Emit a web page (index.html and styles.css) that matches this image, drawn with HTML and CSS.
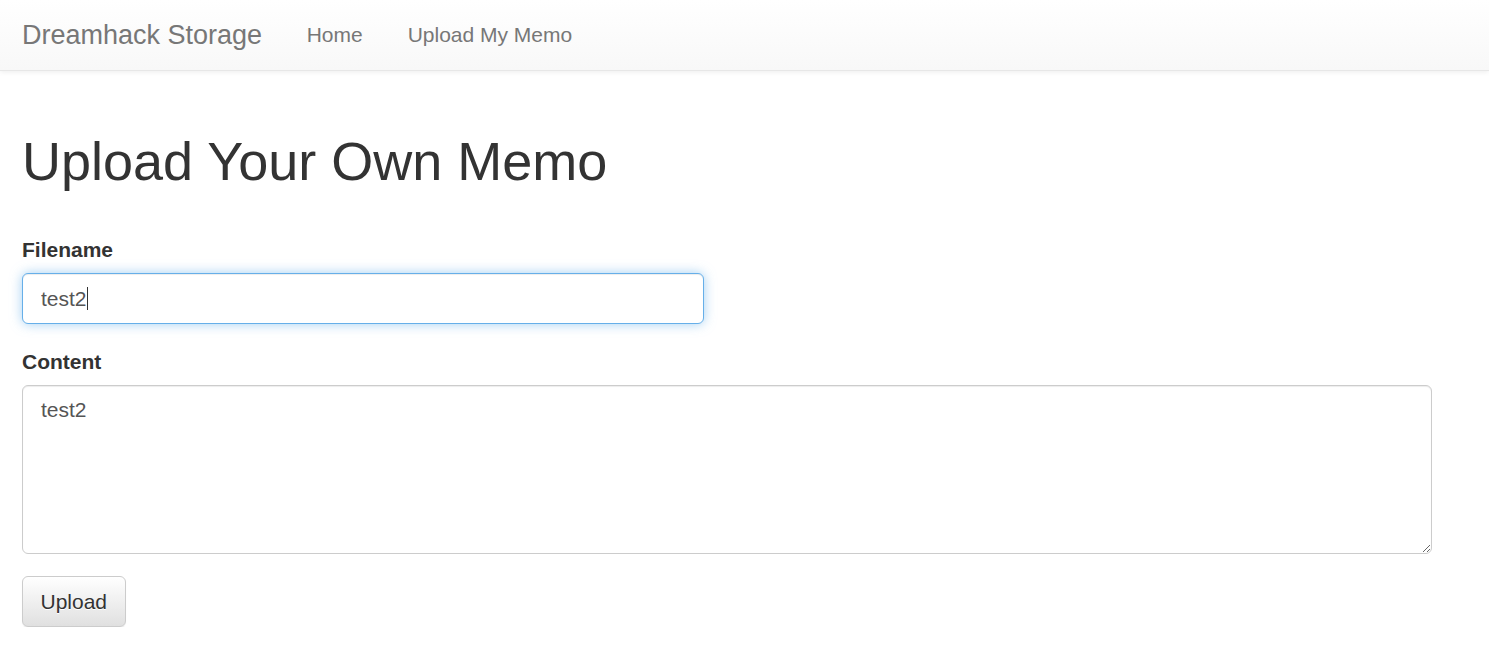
FILE: index.html
```html
<!DOCTYPE html>
<html lang="en">
<head>
<meta charset="utf-8">
<title>Dreamhack Storage</title>
<link rel="stylesheet" href="styles.css">
</head>
<body>
<nav class="navbar">
  <div class="nav-inner">
    <a class="brand" href="#">Dreamhack Storage</a>
    <ul class="nav-links">
      <li><a href="#">Home</a></li>
      <li><a href="#">Upload My Memo</a></li>
    </ul>
  </div>
</nav>
<main class="container">
  <h1 class="title">Upload Your Own Memo</h1>
  <form class="memo-form">
    <div class="form-group form-group-first">
      <label class="label" for="filename">Filename</label>
      <div class="input-wrap">
        <input class="form-control input-focus" id="filename" type="text" value="test2">
        <span class="caret"></span>
      </div>
    </div>
    <div class="form-group">
      <label class="label" for="content">Content</label>
      <textarea class="form-control textarea" id="content">test2</textarea>
    </div>
    <button class="btn" type="button">Upload</button>
  </form>
</main>
</body>
</html>
```
FILE: styles.css
```css
* { box-sizing: border-box; }
html, body { margin: 0; padding: 0; }
body {
  font-family: "Liberation Sans", Arial, sans-serif;
  font-size: 21px;
  line-height: 1.42857;
  color: #333;
  background: #fff;
}
.navbar {
  height: 71px;
  background: linear-gradient(to bottom, #ffffff 0%, #f8f8f8 100%);
  border-bottom: 1px solid #e7e7e7;
  box-shadow: inset 0 1px 0 rgba(255,255,255,.15), 0 1px 5px rgba(0,0,0,.075);
}
.nav-inner {
  display: flex;
  align-items: center;
  height: 70px;
  padding: 0 22px;
}
.brand {
  font-size: 27px;
  color: #777;
  text-decoration: none;
  line-height: 68px;
  padding-right: 22px;
}
.nav-links {
  display: flex;
  list-style: none;
  margin: 0;
  padding: 0;
}
.nav-links a {
  display: block;
  padding: 0 22.5px;
  line-height: 68px;
  color: #777;
  text-decoration: none;
}
.container {
  padding: 0 22px;
}
.title {
  font-size: 54px;
  font-weight: 500;
  line-height: 1.1;
  margin: 61px 0 44px;
  color: #333;
}
.memo-form { width: 1410px; }
.form-group { margin-bottom: 22px; }
.form-group-first { margin-bottom: 23px; }
.label {
  display: block;
  font-weight: 700;
  margin-bottom: 8px;
}
.input-wrap { position: relative; width: 682px; }
.form-control {
  display: block;
  width: 100%;
  padding: 9px 18px;
  font-family: inherit;
  font-size: 21px;
  line-height: 1.42857;
  color: #555;
  background: #fff;
  border: 1px solid #ccc;
  border-radius: 6px;
  box-shadow: inset 0 1px 1px rgba(0,0,0,.075);
  outline: none;
}
.form-control#filename { height: 51px; caret-color: transparent; }
.input-focus {
  border-color: #66afe9;
  box-shadow: inset 0 1px 1px rgba(0,0,0,.075), 0 0 12px rgba(102,175,233,.6);
}
.caret {
  position: absolute;
  left: 65px;
  top: 14px;
  width: 1px;
  height: 23px;
  background: #333;
}
.textarea {
  height: 169px;
  resize: vertical;
}
.btn {
  display: inline-block;
  height: 51px;
  padding: 0 17.5px;
  font-family: inherit;
  font-size: 21px;
  color: #333;
  background: linear-gradient(to bottom, #ffffff 0%, #e0e0e0 100%);
  border: 1px solid #ccc;
  border-radius: 6px;
  box-shadow: inset 0 1px 0 rgba(255,255,255,.15), 0 1px 1px rgba(0,0,0,.075);
  text-shadow: 0 1px 0 #fff;
  cursor: pointer;
}
```
